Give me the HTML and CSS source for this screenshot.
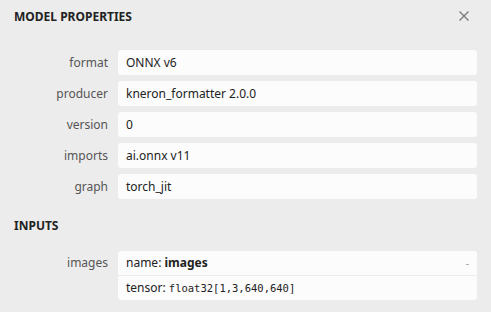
FILE: index.html
```html
<!DOCTYPE html>
<html>
<head>
<meta charset="utf-8">
<link rel="stylesheet" href="styles.css">
</head>
<body>
<div class="sidebar">
  <div class="header">
    <div class="title">MODEL PROPERTIES</div>
    <svg class="close" width="12" height="12" viewBox="0 0 12 12"><path d="M1.5 1.5 L10.5 10.5 M10.5 1.5 L1.5 10.5" stroke="#777" stroke-width="1.3" fill="none"/></svg>
  </div>
  <div class="list">
    <div class="row"><div class="label">format</div><div class="value">ONNX v6</div></div>
    <div class="row"><div class="label">producer</div><div class="value">kneron_formatter 2.0.0</div></div>
    <div class="row"><div class="label">version</div><div class="value">0</div></div>
    <div class="row"><div class="label">imports</div><div class="value">ai.onnx v11</div></div>
    <div class="row"><div class="label">graph</div><div class="value">torch_jit</div></div>
  </div>
  <div class="section">INPUTS</div>
  <div class="row">
    <div class="label label-input">images</div>
    <div class="argbox">
      <div class="arg arg-name"><span>name: <b>images</b></span><span class="toggle">-</span></div>
      <div class="arg">tensor: <code>float32[1,3,640,640]</code></div>
    </div>
  </div>
</div>
</body>
</html>
```
FILE: styles.css
```css
html, body {
  margin: 0;
  padding: 0;
  background: #ececec;
}
body {
  font-family: "Noto Sans", "Open Sans", sans-serif;
  font-size: 12px;
  color: #222;
}
.sidebar {
  padding: 0 14px;
}
.header {
  display: flex;
  justify-content: space-between;
  align-items: center;
  height: 32px;
}
.title {
  font-weight: bold;
  font-size: 12px;
  color: #222;
}
.close {
  margin-right: 7px;
}
.list {
  margin-top: 18px;
  display: flex;
  flex-direction: column;
  gap: 6px;
}
.row {
  display: flex;
  align-items: flex-start;
}
.label {
  width: 94px;
  margin-right: 10px;
  text-align: right;
  color: #555;
  line-height: 25px;
}
.label-input {
  line-height: 24px;
}
.value {
  flex: 1;
  background: #fcfcfc;
  border-radius: 3px;
  height: 25px;
  line-height: 25px;
  padding: 0 8px;
}
.section {
  font-weight: bold;
  margin-top: 15px;
  height: 37px;
  line-height: 24px;
}
.argbox {
  flex: 1;
  background: #fcfcfc;
  border-radius: 3px;
  display: flex;
  flex-direction: column;
}
.arg {
  height: 24px;
  line-height: 24px;
  padding: 0 8px;
}
.arg-name {
  display: flex;
  justify-content: space-between;
  border-bottom: 1px solid #ececec;
}
.toggle {
  color: #999;
  font-size: 10px;
}
code {
  font-family: "DejaVu Sans Mono", monospace;
  font-size: 10.5px;
  color: #222;
}
```
